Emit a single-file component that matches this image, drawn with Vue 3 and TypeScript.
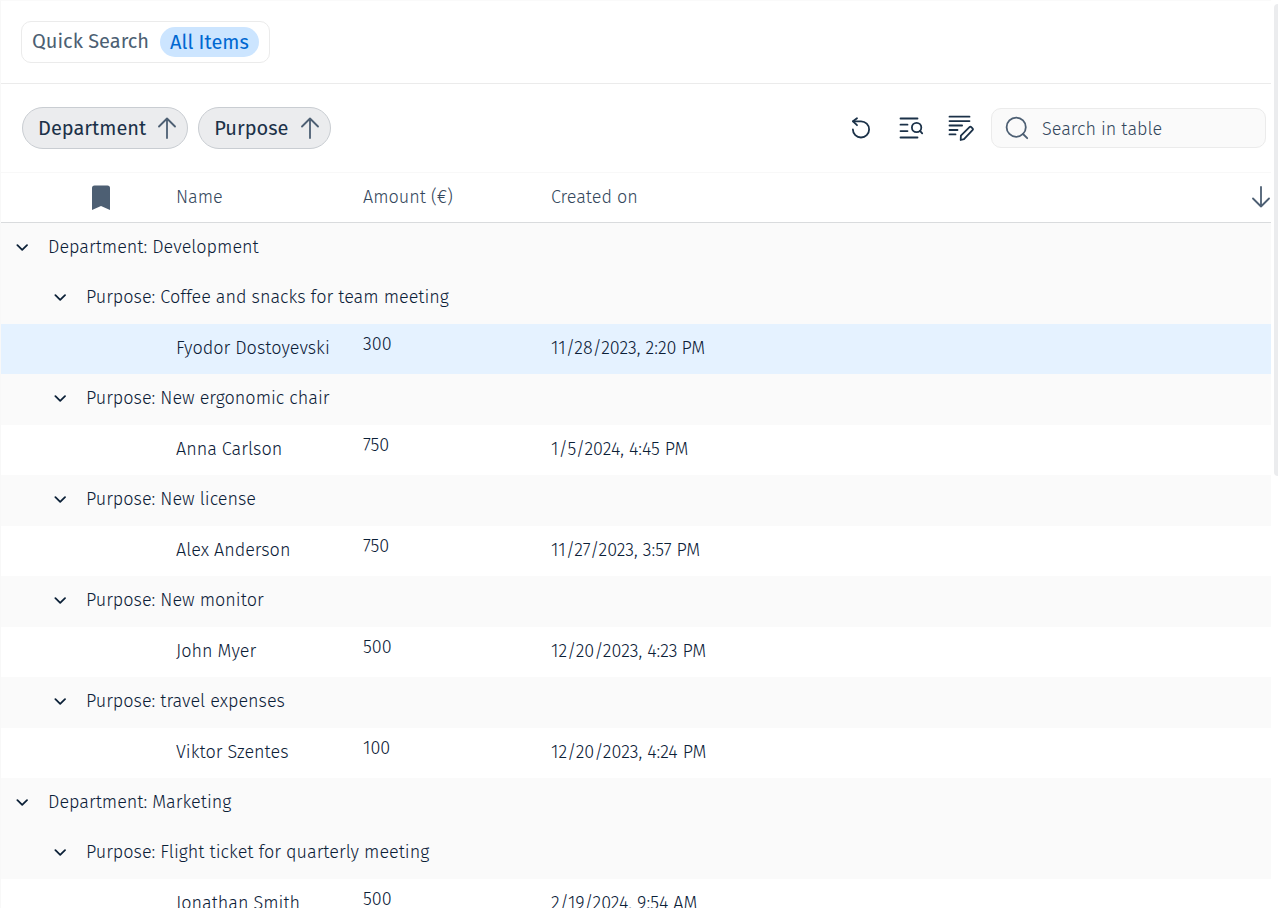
<script setup lang="ts">
import { computed, ref } from 'vue'

interface Expense {
  name: string
  amount: number
  created: string
  selected?: boolean
}

interface PurposeGroup {
  purpose: string
  items: Expense[]
}

interface DepartmentGroup {
  department: string
  purposes: PurposeGroup[]
}

interface Row {
  key: string
  level: 0 | 1 | 2
  label: string
  item?: Expense
}

const sortKeys = ['Department', 'Purpose']

const data: DepartmentGroup[] = [
  {
    department: 'Development',
    purposes: [
      {
        purpose: 'Coffee and snacks for team meeting',
        items: [{ name: 'Fyodor Dostoyevski', amount: 300, created: '11/28/2023, 2:20 PM', selected: true }],
      },
      { purpose: 'New ergonomic chair', items: [{ name: 'Anna Carlson', amount: 750, created: '1/5/2024, 4:45 PM' }] },
      { purpose: 'New license', items: [{ name: 'Alex Anderson', amount: 750, created: '11/27/2023, 3:57 PM' }] },
      { purpose: 'New monitor', items: [{ name: 'John Myer', amount: 500, created: '12/20/2023, 4:23 PM' }] },
      { purpose: 'travel expenses', items: [{ name: 'Viktor Szentes', amount: 100, created: '12/20/2023, 4:24 PM' }] },
    ],
  },
  {
    department: 'Marketing',
    purposes: [
      {
        purpose: 'Flight ticket for quarterly meeting',
        items: [{ name: 'Jonathan Smith', amount: 500, created: '2/19/2024, 9:54 AM' }],
      },
    ],
  },
]

const collapsed = ref<Set<string>>(new Set())
const query = ref('')

function toggle(key: string): void {
  const next = new Set(collapsed.value)
  if (next.has(key)) next.delete(key)
  else next.add(key)
  collapsed.value = next
}

const rows = computed<Row[]>(() => {
  const out: Row[] = []
  const needle = query.value.trim().toLowerCase()
  for (const dep of data) {
    out.push({ key: dep.department, level: 0, label: `Department: ${dep.department}` })
    if (collapsed.value.has(dep.department)) continue
    for (const group of dep.purposes) {
      const items = group.items.filter((i) => i.name.toLowerCase().includes(needle))
      if (!items.length) continue
      const key = `${dep.department}/${group.purpose}`
      out.push({ key, level: 1, label: `Purpose: ${group.purpose}` })
      if (collapsed.value.has(key)) continue
      for (const item of items) out.push({ key: `${key}/${item.name}`, level: 2, label: item.name, item })
    }
  }
  return out
})
</script>

<template>
  <div class="page">
    <main class="panel">
      <header class="quick">
        <div class="quick-box">
          <span class="quick-label">Quick Search</span>
          <button type="button" class="quick-pill">All Items</button>
        </div>
      </header>

      <section class="toolbar">
        <div class="chips">
          <button v-for="key in sortKeys" :key="key" type="button" class="chip">
            <span>{{ key }}</span>
            <svg class="arrow" viewBox="0 0 18 22" aria-hidden="true">
              <path d="M9 21V1.5M1 9.5 9 1.5l8 8" />
            </svg>
          </button>
        </div>

        <div class="tools">
          <button type="button" class="tool" aria-label="Reset">
            <svg viewBox="0 0 26 26" aria-hidden="true">
              <path d="M4.9 14.4a8.1 8.1 0 1 0 8.1-8.1H5" />
              <path d="M9 3.2 5 6.3 9 10.2" />
            </svg>
          </button>
          <button type="button" class="tool" aria-label="Search filters">
            <svg viewBox="0 0 26 26" aria-hidden="true">
              <path d="M2.5 3.5h17M2.5 9.7h7M2.5 16.1h7M2.5 22.5h17" />
              <circle cx="18.6" cy="12.5" r="4.7" />
              <path d="m22 15.9 2.2 2.4" />
            </svg>
          </button>
          <button type="button" class="tool" aria-label="Edit table">
            <svg viewBox="0 0 26 26" aria-hidden="true">
              <path d="M1.5 1.7h20M1.5 6.1h20M1.5 10.5h12.6M1.5 15h8M1.5 19.4h6" />
              <path d="M12.9 20.7 21.5 12.2q.9-.9 1.8 0l1.2 1.2q.9.9 0 1.8l-8.5 9-3.3.8z" />
            </svg>
          </button>
        </div>

        <label class="search">
          <svg viewBox="0 0 24 24" aria-hidden="true">
            <circle cx="11.2" cy="11.2" r="9.6" />
            <path d="m18 18 4.2 4.2" />
          </svg>
          <input v-model="query" type="search" placeholder="Search in table" aria-label="Search in table" />
        </label>
      </section>

      <table class="grid">
        <colgroup>
          <col class="col-mark" />
          <col class="col-data" />
          <col class="col-data" />
          <col />
        </colgroup>
        <thead>
          <tr>
            <th scope="col" class="mark">
              <svg viewBox="0 0 18 26" role="img" aria-label="Bookmark">
                <path d="M2.5.5h13A2.5 2.5 0 0 1 18 3v22l-9-4-9 4V3A2.5 2.5 0 0 1 2.5.5z" />
              </svg>
            </th>
            <th scope="col">Name</th>
            <th scope="col">Amount (€)</th>
            <th scope="col">
              <div class="created">
                <span>Created on</span>
                <button type="button" class="sort" aria-label="Sort descending">
                  <svg class="arrow" viewBox="0 0 18 22" aria-hidden="true">
                    <path d="M9 1v19.5M1 12.5l8 8 8-8" />
                  </svg>
                </button>
              </div>
            </th>
          </tr>
        </thead>
        <tbody>
          <template v-for="row in rows" :key="row.key">
            <tr v-if="row.item" class="item" :class="{ selected: row.item.selected }">
              <td></td>
              <td>{{ row.item.name }}</td>
              <td class="amount">{{ row.item.amount }}</td>
              <td>{{ row.item.created }}</td>
            </tr>
            <tr v-else class="group" :class="row.level === 0 ? 'department' : 'purpose'">
              <td colspan="4">
                <button
                  type="button"
                  class="group-toggle"
                  :aria-expanded="!collapsed.has(row.key)"
                  @click="toggle(row.key)"
                >
                  <svg viewBox="0 0 12 10" aria-hidden="true"><path d="m1.4 3.2 4.8 4.6L11 3.2" /></svg>
                  <span>{{ row.label }}</span>
                </button>
              </td>
            </tr>
          </template>
        </tbody>
      </table>
    </main>
    <div class="scrollbar" aria-hidden="true"><div class="thumb"></div></div>
  </div>
</template>

<style>
body {
  background: #fff;
}
</style>

<style scoped>
.page {
  --ink: #1b3148;
  --ink-light: #0b2037;
  --muted: #4d5f73;
  --muted-light: #34475c;
  display: flex;
  height: 100vh;
  overflow: hidden;
  box-sizing: border-box;
  color: var(--ink);
  font-family: 'Fira Sans', 'Noto Sans', 'Open Sans', sans-serif;
  font-size: 18px;
  font-weight: 300;
  line-height: 22px;
}

.page * {
  box-sizing: border-box;
}

button,
input {
  margin: 0;
  padding: 0;
  border: 0;
  background: none;
  color: inherit;
  font: inherit;
}

button {
  cursor: pointer;
}

svg {
  flex: none;
  display: block;
  fill: none;
  stroke: currentColor;
  stroke-width: 1.8;
  stroke-linecap: round;
  stroke-linejoin: round;
}

.panel {
  flex: 1;
  min-width: 0;
  border-top: 1px solid #fafafa;
  border-left: 1px solid #f8f8f8;
}

.quick {
  display: flex;
  padding: 20px;
  border-bottom: 1px solid #ebebeb;
}

.quick-box {
  display: flex;
  align-items: center;
  gap: 11px;
  height: 42px;
  padding: 0 10px;
  border: 1px solid #ebebeb;
  border-radius: 10px;
  font-size: 20px;
  font-weight: 400;
}

.quick-label {
  padding-bottom: 2px;
  color: var(--muted);
}

.quick-pill {
  height: 30px;
  padding: 0 10px;
  border-radius: 15px;
  background: #cce5ff;
  color: #0068d1;
}

.toolbar {
  display: flex;
  align-items: center;
  height: 88px;
  padding: 0 5px 0 21px;
}

.chips {
  display: flex;
  gap: 10px;
  margin-right: auto;
}

.chip {
  display: flex;
  align-items: center;
  gap: 12px;
  height: 42px;
  padding: 0 11px 0 15px;
  border: 1px solid #c9cdd2;
  border-radius: 21px;
  background: #ebecee;
  font-size: 20px;
  font-weight: 400;
}

.arrow {
  width: 18px;
  height: 22px;
  color: var(--muted);
}

.tools {
  display: flex;
  gap: 24px;
  margin-right: 17px;
}

.tool svg {
  width: 26px;
  height: 26px;
}

.search {
  display: flex;
  align-items: center;
  gap: 13px;
  width: 275px;
  height: 40px;
  padding: 0 13px;
  border: 1px solid #ebebeb;
  border-radius: 10px;
  background: #fafafa;
  color: var(--muted);
}

.search svg {
  width: 24px;
  height: 24px;
}

.search input {
  flex: 1;
  min-width: 0;
  padding-top: 2px;
  outline: 0;
  appearance: none;
}

.search input::placeholder {
  color: var(--muted-light);
  opacity: 1;
}

.grid {
  width: 100%;
  table-layout: fixed;
  border-collapse: separate;
  border-spacing: 0;
}

.col-mark {
  width: 175px;
}

.col-data {
  width: 187px;
}

.col-data + .col-data {
  width: 188px;
}

th,
td {
  padding: 0;
  text-align: left;
  font-weight: inherit;
  white-space: nowrap;
  vertical-align: middle;
}

th {
  height: 51px;
  padding-bottom: 2px;
  border-top: 1px solid #f8f8f8;
  border-bottom: 1px solid #d9dbdd;
  color: var(--muted-light);
}

td {
  color: var(--ink-light);
}

th.mark {
  padding: 0 0 0 91px;
  color: var(--muted);
}

.mark svg {
  width: 18px;
  height: 26px;
  fill: currentColor;
  stroke: none;
}

.created {
  display: flex;
  align-items: center;
  justify-content: space-between;
  padding-right: 1px;
}

.item td {
  height: 50px;
  padding-bottom: 2px;
}

.item .amount {
  padding-bottom: 10px;
}

.selected {
  background: #e5f2ff;
}

.group {
  background: #fafafa;
}

.department td {
  height: 50px;
  padding: 0 0 2px 15px;
}

.purpose td {
  height: 51px;
  padding: 0 0 4px 53px;
}

.group-toggle {
  display: flex;
  align-items: center;
  gap: 20px;
}

.group-toggle svg {
  width: 12px;
  height: 10px;
}

.scrollbar {
  flex: none;
  width: 7px;
  padding: 4px 0 0 3px;
}

.thumb {
  height: 52vh;
  border-radius: 4px 0 0 4px;
  background: #ebecee;
}
</style>
